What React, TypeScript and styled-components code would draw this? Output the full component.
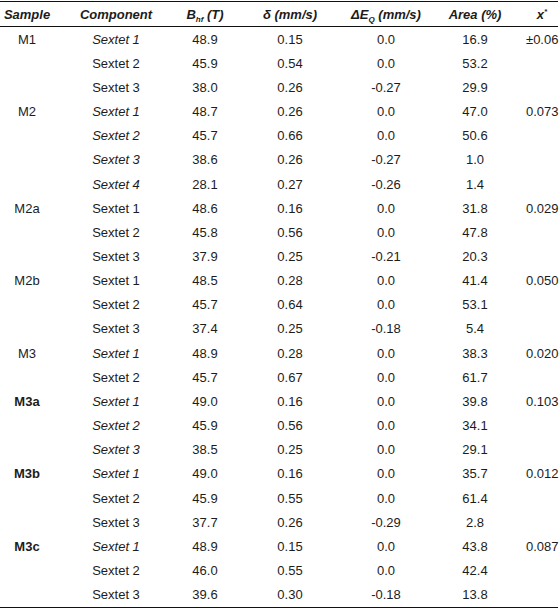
import React from 'react';
import styled, { createGlobalStyle } from 'styled-components';

interface FitRow {
  sample?: string;
  boldSample?: boolean;
  component: string;
  italic?: boolean;
  bhf: string;
  delta: string;
  deq: string;
  area: string;
  chi?: string;
}

const rows: FitRow[] = [
  { sample: 'M1', component: 'Sextet 1', italic: true, bhf: '48.9', delta: '0.15', deq: '0.0', area: '16.9', chi: '±0.06' },
  { component: 'Sextet 2', bhf: '45.9', delta: '0.54', deq: '0.0', area: '53.2' },
  { component: 'Sextet 3', bhf: '38.0', delta: '0.26', deq: '-0.27', area: '29.9' },
  { sample: 'M2', component: 'Sextet 1', italic: true, bhf: '48.7', delta: '0.26', deq: '0.0', area: '47.0', chi: '0.073' },
  { component: 'Sextet 2', italic: true, bhf: '45.7', delta: '0.66', deq: '0.0', area: '50.6' },
  { component: 'Sextet 3', italic: true, bhf: '38.6', delta: '0.26', deq: '-0.27', area: '1.0' },
  { component: 'Sextet 4', italic: true, bhf: '28.1', delta: '0.27', deq: '-0.26', area: '1.4' },
  { sample: 'M2a', component: 'Sextet 1', bhf: '48.6', delta: '0.16', deq: '0.0', area: '31.8', chi: '0.029' },
  { component: 'Sextet 2', bhf: '45.8', delta: '0.56', deq: '0.0', area: '47.8' },
  { component: 'Sextet 3', bhf: '37.9', delta: '0.25', deq: '-0.21', area: '20.3' },
  { sample: 'M2b', component: 'Sextet 1', bhf: '48.5', delta: '0.28', deq: '0.0', area: '41.4', chi: '0.050' },
  { component: 'Sextet 2', bhf: '45.7', delta: '0.64', deq: '0.0', area: '53.1' },
  { component: 'Sextet 3', bhf: '37.4', delta: '0.25', deq: '-0.18', area: '5.4' },
  { sample: 'M3', component: 'Sextet 1', italic: true, bhf: '48.9', delta: '0.28', deq: '0.0', area: '38.3', chi: '0.020' },
  { component: 'Sextet 2', bhf: '45.7', delta: '0.67', deq: '0.0', area: '61.7' },
  { sample: 'M3a', boldSample: true, component: 'Sextet 1', italic: true, bhf: '49.0', delta: '0.16', deq: '0.0', area: '39.8', chi: '0.103' },
  { component: 'Sextet 2', italic: true, bhf: '45.9', delta: '0.56', deq: '0.0', area: '34.1' },
  { component: 'Sextet 3', italic: true, bhf: '38.5', delta: '0.25', deq: '0.0', area: '29.1' },
  { sample: 'M3b', boldSample: true, component: 'Sextet 1', italic: true, bhf: '49.0', delta: '0.16', deq: '0.0', area: '35.7', chi: '0.012' },
  { component: 'Sextet 2', bhf: '45.9', delta: '0.55', deq: '0.0', area: '61.4' },
  { component: 'Sextet 3', bhf: '37.7', delta: '0.26', deq: '-0.29', area: '2.8' },
  { sample: 'M3c', boldSample: true, component: 'Sextet 1', italic: true, bhf: '48.9', delta: '0.15', deq: '0.0', area: '43.8', chi: '0.087' },
  { component: 'Sextet 2', bhf: '46.0', delta: '0.55', deq: '0.0', area: '42.4' },
  { component: 'Sextet 3', bhf: '39.6', delta: '0.30', deq: '-0.18', area: '13.8' },
];

const GlobalStyle = createGlobalStyle`
  html, body {
    margin: 0;
    padding: 0;
    background: #ffffff;
  }
`;

const Page = styled.div`
  width: 560px;
  padding-top: 1px;
`;

const Table = styled.table`
  width: 558px;
  border-collapse: collapse;
  table-layout: fixed;
  font-family: 'Liberation Sans', Arial, sans-serif;
  font-size: 13px;
  color: #1c1c1c;
  border-top: 1px solid #111;
  border-bottom: 1px solid #111;
`;

const HeadCell = styled.th`
  height: 24px;
  padding: 0;
  font-weight: bold;
  font-style: italic;
  text-align: center;
  border-bottom: 1px solid #111;
  white-space: nowrap;
`;

const Cell = styled.td<{ $italic?: boolean; $bold?: boolean }>`
  height: 24.17px;
  padding: 0;
  text-align: center;
  white-space: nowrap;
  font-style: ${p => (p.$italic ? 'italic' : 'normal')};
  font-weight: ${p => (p.$bold ? 'bold' : 'normal')};
`;

const Sub = styled.sub`
  font-size: 8px;
  vertical-align: -3px;
  line-height: 0;
`;

const Sup = styled.sup`
  font-size: 8px;
  vertical-align: 5px;
  line-height: 0;
`;

export default function App() {
  return (
    <Page>
      <GlobalStyle />
      <Table>
        <colgroup>
          <col style={{ width: 54 }} />
          <col style={{ width: 124 }} />
          <col style={{ width: 54 }} />
          <col style={{ width: 116 }} />
          <col style={{ width: 76 }} />
          <col style={{ width: 102 }} />
          <col style={{ width: 32 }} />
        </colgroup>
        <thead>
          <tr>
            <HeadCell>Sample</HeadCell>
            <HeadCell>Component</HeadCell>
            <HeadCell>
              B<Sub>hf</Sub> (T)
            </HeadCell>
            <HeadCell>δ (mm/s)</HeadCell>
            <HeadCell>
              ΔE<Sub>Q</Sub> (mm/s)
            </HeadCell>
            <HeadCell>Area (%)</HeadCell>
            <HeadCell>
              x<Sup>*</Sup>
            </HeadCell>
          </tr>
        </thead>
        <tbody>
          {rows.map((r, i) => (
            <tr key={i}>
              <Cell $bold={r.boldSample}>{r.sample ?? ''}</Cell>
              <Cell $italic={r.italic}>{r.component}</Cell>
              <Cell>{r.bhf}</Cell>
              <Cell>{r.delta}</Cell>
              <Cell>{r.deq}</Cell>
              <Cell>{r.area}</Cell>
              <Cell>{r.chi ?? ''}</Cell>
            </tr>
          ))}
        </tbody>
      </Table>
    </Page>
  );
}
